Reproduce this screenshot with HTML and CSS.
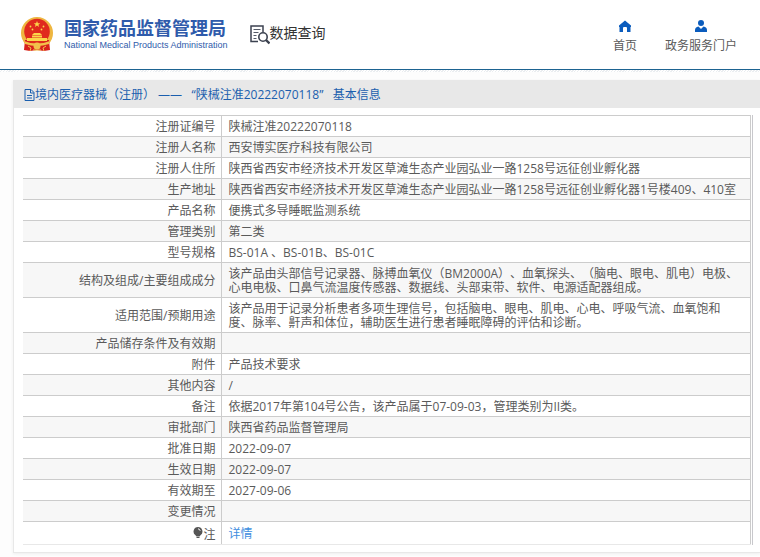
FILE: index.html
```html
<!DOCTYPE html>
<html lang="zh-CN">
<head>
    <meta charset="UTF-8">
    <meta name="viewport" content="width=device-width, initial-scale=1.0">
    <title>国家药品监督管理局 - 数据查询</title>
    <link rel="stylesheet" href="styles.css">
</head>
<body>
    <!-- 头部 -->
    <header class="header">
        <a class="logo" href="#">
            <svg class="emblem" viewBox="0 0 34 36" aria-hidden="true">
                <circle cx="17" cy="17" r="16" fill="#eeb640"/>
                <path d="M5 24h24l1 10-6 1-7-1-7 1-6-1z" fill="#d8201c"/>
                <circle cx="17" cy="15.500" r="12.800" fill="#e02a1e"/>
                <path d="M17 5l.9 2.200h2.400l-1.900 1.500.7 2.300-2.100-1.400-2.100 1.400.7-2.300-1.900-1.500h2.400z" fill="#fbd64a"/>
                <g fill="#fbd64a">
                    <circle cx="10.500" cy="10.500" r=".9"/>
                    <circle cx="12.500" cy="13.500" r=".9"/>
                    <circle cx="21.500" cy="13.500" r=".9"/>
                    <circle cx="23.500" cy="10.500" r=".9"/>
                    <path d="M12 19l2-2h6l2 2zM12 19.500h10v2H12zM7 22h20v3H7z"/>
                </g>
                <path d="M4 25q13 5 26 0l-1 3q-12 4-24 0z" fill="#f2c14b"/>
                <circle cx="17" cy="30" r="3.500" fill="#f2c14b"/>
                <path d="M8 30l3 2-1 3M26 30l-3 2 1 3M13 34h8" fill="none" stroke="#f2c14b"/>
            </svg>
            <span class="logo-text">
                <span class="logo-cn">国家药品监督管理局</span>
                <span class="logo-en">National Medical Products Administration</span>
            </span>
        </a>
        <a class="query" href="#">
            <svg class="query-icon" viewBox="0 0 20 20" aria-hidden="true">
                <path d="M8 16.500H1V1h12v6" fill="none" stroke="#3c4250" stroke-width="1.500"/>
                <path d="M3.500 4.500h7M3.500 7.500h5M3.500 10.500h3M3.500 13.500h3" stroke="#555b68"/>
                <circle cx="13" cy="12" r="4.200" fill="#fff" stroke="#3c4250" stroke-width="1.600"/>
                <path d="M16 15l3.500 3.500" stroke="#3c4250" stroke-width="2.400"/>
            </svg>
            <span>数据查询</span>
        </a>
        <nav class="nav">
            <a href="#">
                <svg class="nav-icon" viewBox="0 0 12 12" aria-hidden="true">
                    <path d="M6 0.500L0 5.500V7h.5v5H4V8q0-1 1-1h2q1 0 1 1v4h3.500V7h.5V5.500z" fill="#0b5cbd"/>
                </svg>
                首页
            </a>
            <a href="#">
                <svg class="nav-icon" viewBox="0 0 12 12" aria-hidden="true">
                    <circle cx="6" cy="3" r="3" fill="#0b5cbd"/>
                    <path d="M0 12V10q0-3 3.500-3.500L6 9l2.500-2.500Q12 7 12 10v2z" fill="#0b5cbd"/>
                </svg>
                政务服务门户
            </a>
        </nav>
    </header>

    <!-- 基本信息 -->
    <main class="panel">
        <h1 class="panel-title">
            <svg class="doc-icon" viewBox="0 0 11 12" aria-hidden="true">
                <path d="M1 .5h6L10 3.500v8H1zM6.500.5V4H10M3 6.500h5M3 9h5" fill="none" stroke="#1b5fae"/>
            </svg>
            <span>境内医疗器械（注册） —— &nbsp; “陕械注准20222070118” &nbsp; 基本信息</span>
        </h1>
        <div class="table-wrap">
            <table class="info">
                <tr><th scope="row">注册证编号</th><td>陕械注准20222070118</td></tr>
                <tr><th scope="row">注册人名称</th><td>西安博实医疗科技有限公司</td></tr>
                <tr><th scope="row">注册人住所</th><td>陕西省西安市经济技术开发区草滩生态产业园弘业一路1258号远征创业孵化器</td></tr>
                <tr><th scope="row">生产地址</th><td>陕西省西安市经济技术开发区草滩生态产业园弘业一路1258号远征创业孵化器1号楼409、410室</td></tr>
                <tr><th scope="row">产品名称</th><td>便携式多导睡眠监测系统</td></tr>
                <tr><th scope="row">管理类别</th><td>第二类</td></tr>
                <tr><th scope="row">型号规格</th><td>BS-01A 、BS-01B、BS-01C</td></tr>
                <tr><th scope="row">结构及组成/主要组成成分</th><td>该产品由头部信号记录器、脉搏血氧仪（BM2000A）、血氧探头、（脑电、眼电、肌电）电极、心电电极、口鼻气流温度传感器、数据线、头部束带、软件、电源适配器组成。</td></tr>
                <tr><th scope="row">适用范围/预期用途</th><td>该产品用于记录分析患者多项生理信号，包括脑电、眼电、肌电、心电、呼吸气流、血氧饱和度、脉率、鼾声和体位，辅助医生进行患者睡眠障碍的评估和诊断。</td></tr>
                <tr><th scope="row">产品储存条件及有效期</th><td></td></tr>
                <tr><th scope="row">附件</th><td>产品技术要求</td></tr>
                <tr><th scope="row">其他内容</th><td>/</td></tr>
                <tr><th scope="row">备注</th><td>依据2017年第104号公告，该产品属于07-09-03，管理类别为II类。</td></tr>
                <tr><th scope="row">审批部门</th><td>陕西省药品监督管理局</td></tr>
                <tr><th scope="row">批准日期</th><td>2022-09-07</td></tr>
                <tr><th scope="row">生效日期</th><td>2022-09-07</td></tr>
                <tr><th scope="row">有效期至</th><td>2027-09-06</td></tr>
                <tr><th scope="row">变更情况</th><td></td></tr>
                <tr class="note">
                    <th scope="row">
                        <svg class="bulb" viewBox="0 0 10 12" aria-hidden="true">
                            <path d="M5 0a4.500 4.500 0 0 1 2.500 8.200L6.500 9.500h-3l-1-1.300A4.500 4.500 0 0 1 5 0z" fill="#555"/>
                            <path d="M3.500 10.500h3" stroke="#555"/>
                            <path d="M5 1.800q1.800.2 2.200 2" fill="none" stroke="#fff"/>
                        </svg>注
                    </th>
                    <td><a href="#">详情</a></td>
                </tr>
            </table>
        </div>
    </main>
</body>
</html>
```

FILE: styles.css
```css
* {
    box-sizing: border-box;
}

body {
    margin: 0;
    font-family: "Open Sans", "Noto Sans CJK SC", sans-serif;
    font-size: 12px;
    line-height: 14px;
    color: #5a5a5a;
    background-color: #fdfdfd;
    text-spacing-trim: space-all;
}

a {
    color: inherit;
    text-decoration: none;
}

/* 头部 */
.header {
    display: flex;
    align-items: center;
    height: 69px;
    padding: 0 23px 0 20px;
    background-color: #fff;
    border-bottom: 1px solid #1d6391;
    box-sizing: content-box;
    position: relative;
}

/* 头部下方的斜纹 */
.header::after {
    content: "";
    position: absolute;
    left: 0;
    right: 0;
    top: 100%;
    margin-top: 1px;
    height: 2px;
    background: repeating-linear-gradient(135deg, #fff 0 1px, #eaedf0 1px 2px);
}

.logo {
    display: flex;
    align-items: center;
    gap: 10px;
    margin-right: 22px;
    padding-bottom: 2px;
}

.emblem {
    width: 34px;
    height: 36px;
}

.logo-text {
    display: flex;
    flex-direction: column;
    color: #2f5bab;
    white-space: nowrap;
}

.logo-cn {
    font-size: 18px;
    line-height: 22px;
    font-weight: bold;
}

.logo-en {
    font-family: "Liberation Sans", sans-serif;
    font-size: 9px;
    line-height: 12px;
}

.query {
    display: flex;
    align-items: center;
    padding-bottom: 4px;
    font-size: 14px;
    line-height: 20px;
    color: #333;
    white-space: nowrap;
}

.query-icon {
    width: 20px;
    height: 20px;
    margin-top: 4px;
}

.nav {
    display: flex;
    gap: 28px;
    margin-left: auto;
    padding-top: 4px;
    white-space: nowrap;
}

.nav a {
    display: flex;
    flex-direction: column;
    align-items: center;
    gap: 7px;
}

.nav-icon {
    width: 12px;
    height: 12px;
}

/* 信息面板 */
.panel {
    margin: 10px 0 4px 13px;
    background-color: #fff;
    border: 1px solid #e8e8e8;
    border-width: 0 0 1px 1px;
    box-shadow: 0 1px 3px #eee;
}

.panel-title {
    display: flex;
    align-items: center;
    margin: 0;
    padding: 8px 10px 6px;
    font-size: 12px;
    font-weight: normal;
    color: #1b5fae;
    background-color: #e8e8e8;
}

.doc-icon {
    width: 11px;
    height: 12px;
}

.table-wrap {
    margin: 7px 7px 7px 9px;
    padding-right: 1px;
    border-right: 1px solid #c8c8cc;
}

.info {
    width: 100%;
    border-collapse: collapse;
    border-right: 1px solid #ccc;
}

.info th,
.info td {
    height: 21px;
    padding: 4px 7px 2px;
    border-top: 1px solid #ccc;
}

.info th {
    width: 198px;
    padding-right: 5px;
    font-weight: normal;
    text-align: right;
    border-right: 1px solid #ccc;
}

.info tr:nth-child(even) {
    background-color: #f7f7f7;
}

.info .note th,
.info .note td {
    height: 23px;
    border-bottom: 1px solid #e8e8e8;
}

.info a {
    color: #3e8ee0;
}

.bulb {
    width: 10px;
    height: 12px;
    vertical-align: baseline;
}
```
